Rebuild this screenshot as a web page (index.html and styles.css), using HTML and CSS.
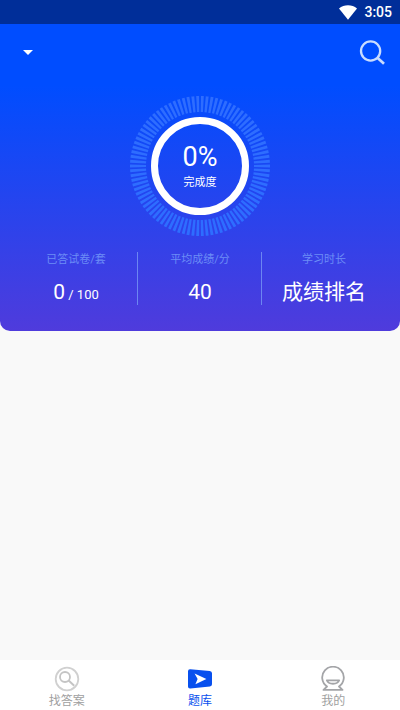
FILE: index.html
```html
<!DOCTYPE html>
<html lang="zh-CN">
<head>
<meta charset="utf-8">
<meta name="viewport" content="width=device-width, initial-scale=1">
<title>题库</title>
<link rel="stylesheet" href="styles.css">
</head>
<body>
<div class="statusbar">
  <svg width="18" height="15" viewBox="0 0 18 15" aria-hidden="true"><path d="M0 3.4C5 -.8 13 -.8 18 3.4L9 14.8z" fill="#fff"/></svg>
  <span>3:05</span>
</div>
<header class="hero">
  <div class="toolbar">
    <button class="icon-button" aria-label="选择题库">
      <svg width="10" height="5" viewBox="0 0 10 5"><path d="M0 0h10L5 5z" fill="#fff"/></svg>
    </button>
    <button class="icon-button" aria-label="搜索">
      <svg width="26" height="26" viewBox="0 0 26 26" fill="none" stroke="#c9dcff" stroke-width="2.3"><circle cx="11.6" cy="12" r="9.6"/><path d="M18.4 18.8l6.6 6" stroke-width="2.7"/></svg>
    </button>
  </div>
  <div class="gauge">
    <svg class="dial" viewBox="0 0 140 140" fill="none" aria-hidden="true">
      <circle cx="70" cy="70" r="62" stroke="#2e6dff" stroke-width="16" pathLength="90" stroke-dasharray=".6 .4" stroke-dashoffset=".3"/>
      <circle cx="70" cy="70" r="45.5" stroke="#fff" stroke-width="7"/>
    </svg>
    <div class="reading">
      <strong>0%</strong>
      <span>完成度</span>
    </div>
  </div>
  <dl class="stats">
    <div class="stat"><dt>已答试卷/套</dt><dd>0<small> / 100</small></dd></div>
    <div class="stat"><dt>平均成绩/分</dt><dd>40</dd></div>
    <div class="stat"><dt>学习时长</dt><dd>成绩排名</dd></div>
  </dl>
</header>
<main class="content"></main>
<nav class="tabs">
  <a href="#answers">
    <svg width="26" height="26" viewBox="0 0 26 26" fill="none" stroke="#d0d0d0" stroke-width="1.8"><circle cx="13" cy="13" r="11.3"/><g stroke="#c4c4c4"><circle cx="11" cy="11" r="5"/><path d="M14.6 14.6l5.6 5.2" stroke-width="2"/></g></svg>
    <span>找答案</span>
  </a>
  <a href="#bank" class="active" aria-current="page">
    <svg width="26" height="26" viewBox="0 0 26 26"><path d="M3.3 3.2L22.8 5Q25 5.2 25 7.2V18.3Q25 20.3 22.9 20.5L3.3 22.6Q1 22.8 1 20.6V5.2Q1 3 3.3 3.2z" fill="#0850ee"/><path d="M7.6 7.6L19.4 13 8.4 18.2 10.6 13z" fill="#fff"/></svg>
    <span>题库</span>
  </a>
  <a href="#me">
    <svg width="26" height="26" viewBox="0 0 26 26" fill="none" stroke="#a4a5a8" stroke-width="1.8" stroke-linejoin="round"><path d="M7 20.5A10.8 10.8 0 1 1 19 20.5L22.5 23.9H3.5z"/><path d="M6.8 14.3H19.2C17.5 18.9 8.5 18.9 6.8 14.3z"/></svg>
    <span>我的</span>
  </a>
</nav>
</body>
</html>
```
FILE: styles.css
```css
* {
  box-sizing: border-box;
}

body {
  margin: 0;
  min-height: 100vh;
  display: flex;
  flex-direction: column;
  background: #f9f9f9;
  font-family: Roboto, "Noto Sans CJK SC", sans-serif;
}

svg {
  display: block;
}

.statusbar {
  height: 24px;
  padding: 0 8px;
  display: flex;
  align-items: center;
  justify-content: flex-end;
  gap: 7px;
  background: #002e99;
  color: #fff;
  font-size: 14px;
  font-weight: 500;
}

.hero {
  padding-bottom: 26px;
  border-radius: 0 0 10px 10px;
  background: linear-gradient(#004dff 20%, #4f3bdc);
  color: #fff;
}

.toolbar {
  height: 56px;
  padding: 0 15px 0 23px;
  display: flex;
  align-items: center;
  justify-content: space-between;
}

.icon-button {
  padding: 0;
  border: 0;
  background: none;
}

.gauge {
  width: 140px;
  margin: 16px auto;
  display: grid;
  place-items: center;
}

.dial,
.reading {
  grid-area: 1 / 1;
}

.dial {
  width: 100%;
}

.reading {
  display: flex;
  flex-direction: column;
  align-items: center;
}

.reading strong {
  font-size: 27px;
  font-weight: 400;
  line-height: 34px;
}

.reading span {
  font-size: 11px;
  line-height: 18px;
}

.stats {
  margin: 0;
  padding: 0 14px;
  display: grid;
  grid-template-columns: repeat(3, 1fr);
  text-align: center;
}

.stat + .stat {
  box-shadow: -1px 0 #6c86f2;
}

.stat dt {
  color: #6c8df6;
  font-size: 11px;
  line-height: 16px;
}

.stat dd {
  margin: 12px 0 0;
  font-size: 21px;
  line-height: 25px;
  white-space: nowrap;
}

.stat small {
  font-size: 13px;
  line-height: 16px;
}

.content {
  flex: 1;
}

.tabs {
  height: 50px;
  padding-top: 6px;
  display: grid;
  grid-template-columns: repeat(3, 1fr);
  background: #fff;
}

.tabs a {
  display: flex;
  flex-direction: column;
  align-items: center;
  color: #a0a0a0;
  font-size: 12px;
  line-height: 18px;
  text-decoration: none;
}

.tabs .active {
  color: #0850ee;
}
```
